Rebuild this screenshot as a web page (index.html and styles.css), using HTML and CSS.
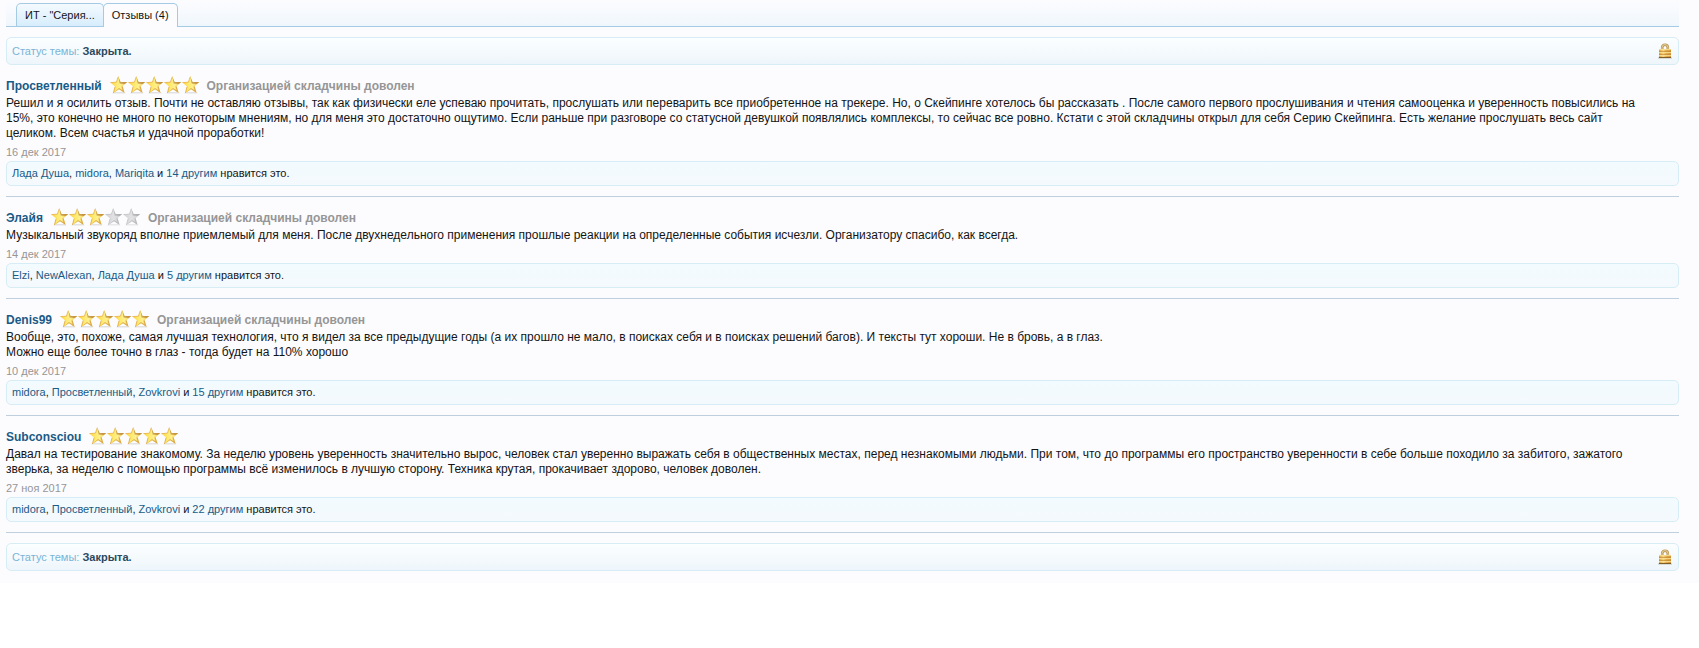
FILE: index.html
```html
<!DOCTYPE html>
<html lang="ru">
<head>
<meta charset="utf-8">
<title>Отзывы</title>
<link rel="stylesheet" href="styles.css">
</head>
<body>
<svg class="defs" aria-hidden="true">
  <defs>
    <linearGradient id="gold" x1="0" y1="0" x2="1" y2="0"><stop offset="0" stop-color="#f8c93a"/><stop offset=".3" stop-color="#ffe766"/><stop offset=".6" stop-color="#fff08c"/><stop offset="1" stop-color="#eeb83e"/></linearGradient>
    <linearGradient id="silver" x1="0" y1="0" x2="1" y2="0"><stop offset="0" stop-color="#d2d2d5"/><stop offset=".5" stop-color="#e2e2e5"/><stop offset="1" stop-color="#cacacd"/></linearGradient>
    <linearGradient id="brass" x1="0" y1="0" x2="1" y2="0"><stop offset="0" stop-color="#d9a03a"/><stop offset=".35" stop-color="#f6d582"/><stop offset=".6" stop-color="#e6ae4c"/><stop offset="1" stop-color="#cf983c"/></linearGradient>
    <symbol id="star" viewBox="0 0 18 18">
      <path d="M2 17.4 16 17.4 13 16 5 16Z" fill="#000" opacity=".1"/>
      <path d="M8.3 .6 10.6 6 17.2 5.9 12.6 10.2 14.6 16.9 9 13.3 3.4 17 5.1 10.6 .4 6.6 6.4 6.2Z" fill="url(#gold)"/>
      <path d="M8.3 .6 10.6 6 17.2 5.9 14.8 8.1 9.7 7.4Z" fill="#a8702a" opacity=".6"/>
      <path d="M12.6 10.2 14.6 16.9 9 13.3 3.4 17 9 12.1 12.6 14.2 11.4 10.5Z" fill="#c98a30" opacity=".6"/>
      <path d="M.4 6.6 6.4 6.2 8.3 .6" fill="none" stroke="#e2a838" stroke-width=".7"/>
      <path d="M5.1 10.6 3.4 17" fill="none" stroke="#d79b35" stroke-width=".7"/>
    </symbol>
    <symbol id="star-off" viewBox="0 0 18 18">
      <path d="M2 17.4 16 17.4 13 16 5 16Z" fill="#000" opacity=".08"/>
      <path d="M8.3 .6 10.6 6 17.2 5.9 12.6 10.2 14.6 16.9 9 13.3 3.4 17 5.1 10.6 .4 6.6 6.4 6.2Z" fill="url(#silver)"/>
      <path d="M8.3 .6 10.6 6 17.2 5.9 14.8 8.1 9.7 7.4Z" fill="#8c8c90" opacity=".45"/>
      <path d="M12.6 10.2 14.6 16.9 9 13.3 3.4 17 9 12.1 12.6 14.2 11.4 10.5Z" fill="#98989c" opacity=".45"/>
      <path d="M.4 6.6 6.4 6.2 8.3 .6" fill="none" stroke="#bcbcc0" stroke-width=".7"/>
      <path d="M5.1 10.6 3.4 17" fill="none" stroke="#bcbcc0" stroke-width=".7"/>
    </symbol>
    <symbol id="lock" viewBox="0 0 16 16">
      <path d="M1 14.5H15V15.5H1Z" fill="#8a7a60" opacity=".45"/>
      <path d="M5.2 7V4.5A2.8 2.8 0 0 1 10.8 4.5V7" fill="none" stroke="#b99450" stroke-width="2.6"/>
      <path d="M5 6V4.5A3 3 0 0 1 8 1.6 3 3 0 0 1 11 4.5V6" fill="none" stroke="#e8d29c"/>
      <rect x="2" y="6" width="12" height="9" fill="url(#brass)"/>
      <path d="M2 6.5H14M2 9.5H14M2 12.5H14" stroke="#fbe29a" opacity=".8"/>
      <path d="M2 8.5H14M2 11.5H14" stroke="#bf862c" opacity=".6"/>
      <path d="M2 14.5H14" stroke="#7d5d2c"/>
    </symbol>
  </defs>
</svg>
<main class="page">
  <nav class="tabs">
    <a class="tab" href="#topic">ИТ - "Серия...</a>
    <a class="tab tab-active" href="#reviews">Отзывы (4)</a>
  </nav>
  <div class="status">
    <span>Статус темы: <strong>Закрыта.</strong></span>
    <svg class="lock" role="img" aria-label="Закрыта"><use href="#lock"/></svg>
  </div>

  <article class="review">
    <header class="head">
      <a class="author" href="#u1">Просветленный</a>
      <span class="stars"><svg><use href="#star"/></svg><svg><use href="#star"/></svg><svg><use href="#star"/></svg><svg><use href="#star"/></svg><svg><use href="#star"/></svg></span>
      <span class="verdict">Организацией складчины доволен</span>
    </header>
    <p class="text">Решил и я осилить отзыв. Почти не оставляю отзывы, так как физически еле успеваю прочитать, прослушать или переварить все приобретенное на трекере. Но, о Скейпинге хотелось бы рассказать . После самого первого прослушивания и чтения самооценка и уверенность повысились на 15%, это конечно не много по некоторым мнениям, но для меня это достаточно ощутимо. Если раньше при разговоре со статусной девушкой появлялись комплексы, то сейчас все ровно. Кстати с этой складчины открыл для себя Серию Скейпинга. Есть желание прослушать весь сайт целиком. Всем счастья и удачной проработки!</p>
    <time class="date" datetime="2017-12-16">16 дек 2017</time>
    <p class="likes"><a href="#l1">Лада Душа</a>, <a href="#l2">midora</a>, <a href="#l3">Mariqita</a> и <a href="#l4">14 другим</a> нравится это.</p>
  </article>

  <article class="review">
    <header class="head">
      <a class="author" href="#u2">Элайя</a>
      <span class="stars"><svg><use href="#star"/></svg><svg><use href="#star"/></svg><svg><use href="#star"/></svg><svg><use href="#star-off"/></svg><svg><use href="#star-off"/></svg></span>
      <span class="verdict">Организацией складчины доволен</span>
    </header>
    <p class="text">Музыкальный звукоряд вполне приемлемый для меня. После двухнедельного применения прошлые реакции на определенные события исчезли. Организатору спасибо, как всегда.</p>
    <time class="date" datetime="2017-12-14">14 дек 2017</time>
    <p class="likes"><a href="#l5">Elzi</a>, <a href="#l6">NewAlexan</a>, <a href="#l7">Лада Душа</a> и <a href="#l8">5 другим</a> нравится это.</p>
  </article>

  <article class="review">
    <header class="head">
      <a class="author" href="#u3">Denis99</a>
      <span class="stars"><svg><use href="#star"/></svg><svg><use href="#star"/></svg><svg><use href="#star"/></svg><svg><use href="#star"/></svg><svg><use href="#star"/></svg></span>
      <span class="verdict">Организацией складчины доволен</span>
    </header>
    <p class="text">Вообще, это, похоже, самая лучшая технология, что я видел за все предыдущие годы (а их прошло не мало, в поисках себя и в поисках решений багов). И тексты тут хороши. Не в бровь, а в глаз.<br>Можно еще более точно в глаз - тогда будет на 110% хорошо</p>
    <time class="date" datetime="2017-12-10">10 дек 2017</time>
    <p class="likes"><a href="#l9">midora</a>, <a href="#l10">Просветленный</a>, <a href="#l11">Zovkrovi</a> и <a href="#l12">15 другим</a> нравится это.</p>
  </article>

  <article class="review">
    <header class="head">
      <a class="author" href="#u4">Subconsciou</a>
      <span class="stars"><svg><use href="#star"/></svg><svg><use href="#star"/></svg><svg><use href="#star"/></svg><svg><use href="#star"/></svg><svg><use href="#star"/></svg></span>
    </header>
    <p class="text">Давал на тестирование знакомому. За неделю уровень уверенность значительно вырос, человек стал уверенно выражать себя в общественных местах, перед незнакомыми людьми. При том, что до программы его пространство уверенности в себе больше походило за забитого, зажатого зверька, за неделю с помощью программы всё изменилось в лучшую сторону. Техника крутая, прокачивает здорово, человек доволен.</p>
    <time class="date" datetime="2017-11-27">27 ноя 2017</time>
    <p class="likes"><a href="#l13">midora</a>, <a href="#l14">Просветленный</a>, <a href="#l15">Zovkrovi</a> и <a href="#l16">22 другим</a> нравится это.</p>
  </article>

  <div class="status">
    <span>Статус темы: <strong>Закрыта.</strong></span>
    <svg class="lock" role="img" aria-label="Закрыта"><use href="#lock"/></svg>
  </div>
</main>
</body>
</html>
```
FILE: styles.css
```css
* { box-sizing: border-box; }
body {
  margin: 0;
  background: #fff;
  color: #141414;
  font-family: "Liberation Sans", Arial, sans-serif;
  font-size: 12px;
  line-height: 15px;
}
a { text-decoration: none; color: #1a5a86; }
p { margin: 0; }
.defs { display: block; width: 0; height: 0; }
.page {
  background: #fcfcff;
  padding: 0 20px 12px 6px;
}
.tabs {
  display: flex;
  align-items: flex-end;
  height: 27px;
  padding-left: 10px;
  border-bottom: 1px solid #a5cae4;
  background: linear-gradient(#fcfcff, #f0f7fc);
  font-size: 11px;
}
.tab {
  height: 23px;
  padding: 0 8px;
  border: 1px solid #a5cae4;
  border-bottom: 0;
  border-radius: 5px 5px 0 0;
  background: linear-gradient(#f4faff, #d7edfc);
  color: #141414;
  line-height: 23px;
}
.tab + .tab { margin-left: -1px; }
.tab-active {
  height: 24px;
  margin-bottom: -1px;
  background: #fcfcff;
}
.status {
  display: flex;
  align-items: center;
  justify-content: space-between;
  height: 28px;
  margin-top: 10px;
  padding: 0 5px;
  border: 1px solid #d7edf6;
  border-radius: 5px;
  background: linear-gradient(#fcfeff, #eef6fb);
  color: #7ab4d8;
  font-size: 11px;
}
.status strong { color: #2b485c; }
.lock { width: 16px; height: 16px; }
.review {
  padding: 10px 0;
  border-bottom: 1px solid #c0cfdd;
}
.head {
  display: flex;
  align-items: center;
  height: 21px;
  font-weight: bold;
  line-height: 20px;
}
.stars {
  display: flex;
  margin: 0 7px 2px 8px;
}
.stars svg { width: 18px; height: 18px; }
.verdict { color: #969696; }
.text { padding-right: 30px; }
.date {
  display: block;
  margin: 4px 0 2px;
  color: #969696;
  font-size: 11px;
  line-height: 14px;
}
.likes {
  padding: 4px 5px;
  border: 1px solid #d7edf6;
  border-radius: 5px;
  background: linear-gradient(#f2fbff, #f4f9fd);
  font-size: 11px;
}
```
